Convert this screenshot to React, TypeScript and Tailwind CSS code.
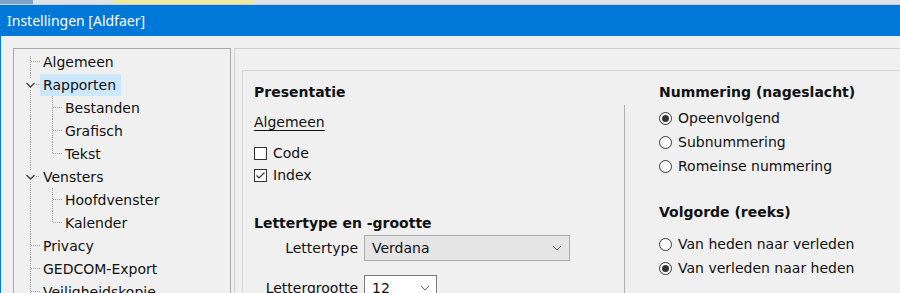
import React from "react";

const FONT = { fontFamily: '"DejaVu Sans", Verdana, sans-serif' };

function Conn({ kind, last, parentCont }: { kind: "leaf0" | "exp" | "leaf1"; last?: boolean; parentCont?: boolean }) {
  const dot = "#a0a0a0";
  if (kind === "leaf1") {
    return (
      <svg width="48" height="23" className="shrink-0">
        {parentCont && <line x1="16.5" y1="0" x2="16.5" y2="23" stroke={dot} strokeDasharray="1 1" />}
        <line x1="38.5" y1="0" x2="38.5" y2={last ? 12 : 23} stroke={dot} strokeDasharray="1 1" />
        <line x1="39" y1="11.5" x2="48" y2="11.5" stroke={dot} strokeDasharray="1 1" />
      </svg>
    );
  }
  if (kind === "exp") {
    return (
      <svg width="26" height="23" className="shrink-0">
        <line x1="16.5" y1="0" x2="16.5" y2="6" stroke={dot} strokeDasharray="1 1" />
        <line x1="16.5" y1="17" x2="16.5" y2="23" stroke={dot} strokeDasharray="1 1" />
        <polyline points="12.5,10 16.5,14 20.5,10" fill="none" stroke="#404040" strokeWidth="1.3" />
        <line x1="22" y1="11.5" x2="26" y2="11.5" stroke={dot} strokeDasharray="1 1" />
      </svg>
    );
  }
  return (
    <svg width="26" height="23" className="shrink-0">
      <line x1="16.5" y1={parentCont === false ? 6 : 0} x2="16.5" y2="23" stroke={dot} strokeDasharray="1 1" />
      <line x1="17" y1="11.5" x2="26" y2="11.5" stroke={dot} strokeDasharray="1 1" />
    </svg>
  );
}

function TreeRow({ label, kind, last, selected, first }: { label: string; kind: "leaf0" | "exp" | "leaf1"; last?: boolean; selected?: boolean; first?: boolean }) {
  return (
    <div className="flex h-[23px] items-center">
      <Conn kind={kind} last={last} parentCont={kind === "leaf1" ? true : first ? false : undefined} />
      <span className={`h-[22px] leading-[22px] px-[3px] whitespace-nowrap ${selected ? "bg-[#cce8ff] pr-[5px]" : ""}`}>{label}</span>
    </div>
  );
}

function Check({ checked }: { checked?: boolean }) {
  return (
    <span className="w-[13px] h-[13px] border border-[#333] bg-white shrink-0 flex items-center justify-center">
      {checked && (
        <svg width="11" height="11" viewBox="0 0 11 11">
          <polyline points="1.5,5.5 4,8 9.5,2.5" fill="none" stroke="#333" strokeWidth="1.2" />
        </svg>
      )}
    </span>
  );
}

function Radio({ checked }: { checked?: boolean }) {
  return (
    <span className="w-[13px] h-[13px] rounded-full border border-[#333] bg-white shrink-0 flex items-center justify-center">
      {checked && <span className="w-[7px] h-[7px] rounded-full bg-[#333]" />}
    </span>
  );
}

function Chevron() {
  return (
    <svg width="10" height="6" viewBox="0 0 10 6">
      <polyline points="1,1 5,5 9,1" fill="none" stroke="#606060" strokeWidth="1" />
    </svg>
  );
}

export default function App() {
  return (
    <div className="w-[900px] h-[293px] overflow-hidden bg-[#f0f0f0] text-[14px] text-[#111]" style={FONT}>
      <div className="h-[5px] flex bg-[#dfe2e6] border-b border-[#c9ced4]">
        <div className="w-[33px] bg-[#7ea3c6]" />
        <div className="w-[80px]" />
        <div className="w-[140px] bg-[#efe9a0]" />
      </div>
      <div className="h-[31px] bg-[#0078d7] flex items-center pl-[7px] text-white text-[14px]" style={{ fontFamily: '"Noto Sans", "Open Sans", sans-serif' }}>
        Instellingen [Aldfaer]
      </div>
      <div className="flex border-l border-[#0078d7] pl-[12px] pt-[12px] h-[257px]">
        <div className="w-[218px] shrink-0 border border-[#a9a9a9] bg-[#f0f0f0] pt-[1px] h-[300px]">
          <TreeRow label="Algemeen" kind="leaf0" first />
          <TreeRow label="Rapporten" kind="exp" selected />
          <TreeRow label="Bestanden" kind="leaf1" />
          <TreeRow label="Grafisch" kind="leaf1" />
          <TreeRow label="Tekst" kind="leaf1" last />
          <TreeRow label="Vensters" kind="exp" />
          <TreeRow label="Hoofdvenster" kind="leaf1" />
          <TreeRow label="Kalender" kind="leaf1" last />
          <TreeRow label="Privacy" kind="leaf0" />
          <TreeRow label="GEDCOM-Export" kind="leaf0" />
          <TreeRow label="Veiligheidskopie" kind="leaf0" />
        </div>
        <div className="ml-[3px] w-[700px] shrink-0 border border-[#cfcfcf] pl-[7px] pt-[21px] h-[300px]">
          <div className="border border-[#d5d5d5] h-[300px] flex">
            <div className="w-[381px] shrink-0 pl-[11px] flex flex-col">
              <div className="mt-[10px] h-[23px] leading-[23px] font-bold">Presentatie</div>
              <div className="mt-[7px] h-[23px] leading-[23px] underline underline-offset-[3px]">Algemeen</div>
              <div className="mt-[8px] h-[22px] flex items-center gap-[6px]"><Check /><span>Code</span></div>
              <div className="h-[22px] flex items-center gap-[6px]"><Check checked /><span>Index</span></div>
              <div className="mt-[26px] h-[23px] leading-[23px] font-bold">Lettertype en -grootte</div>
              <div className="h-[26px] flex items-center">
                <span className="w-[104px] text-right">Lettertype</span>
                <div className="ml-[6px] w-[206px] h-[26px] bg-[#e5e5e5] border border-[#adadad] flex items-center justify-between pl-[7px] pr-[7px]">
                  <span>Verdana</span>
                  <Chevron />
                </div>
              </div>
              <div className="mt-[14px] h-[26px] flex items-center">
                <span className="w-[104px] text-right">Lettergrootte</span>
                <div className="ml-[6px] w-[73px] h-[26px] bg-white border border-[#7a7a7a] flex items-center justify-between pl-[7px] pr-[6px]">
                  <span>12</span>
                  <Chevron />
                </div>
              </div>
            </div>
            <div className="w-px bg-[#b0b0b0] mt-[34px] shrink-0" />
            <div className="pl-[34px] flex flex-col">
              <div className="mt-[10px] h-[23px] leading-[23px] font-bold whitespace-nowrap">Nummering (nageslacht)</div>
              <div className="mt-[2px] h-[24px] flex items-center gap-[6px]"><Radio checked /><span>Opeenvolgend</span></div>
              <div className="h-[24px] flex items-center gap-[6px]"><Radio /><span>Subnummering</span></div>
              <div className="h-[24px] flex items-center gap-[6px]"><Radio /><span>Romeinse nummering</span></div>
              <div className="mt-[23px] h-[23px] leading-[23px] font-bold">Volgorde (reeks)</div>
              <div className="mt-[8px] h-[24px] flex items-center gap-[6px] whitespace-nowrap"><Radio /><span>Van heden naar verleden</span></div>
              <div className="h-[24px] flex items-center gap-[6px] whitespace-nowrap"><Radio checked /><span>Van verleden naar heden</span></div>
            </div>
          </div>
        </div>
      </div>
    </div>
  );
}
